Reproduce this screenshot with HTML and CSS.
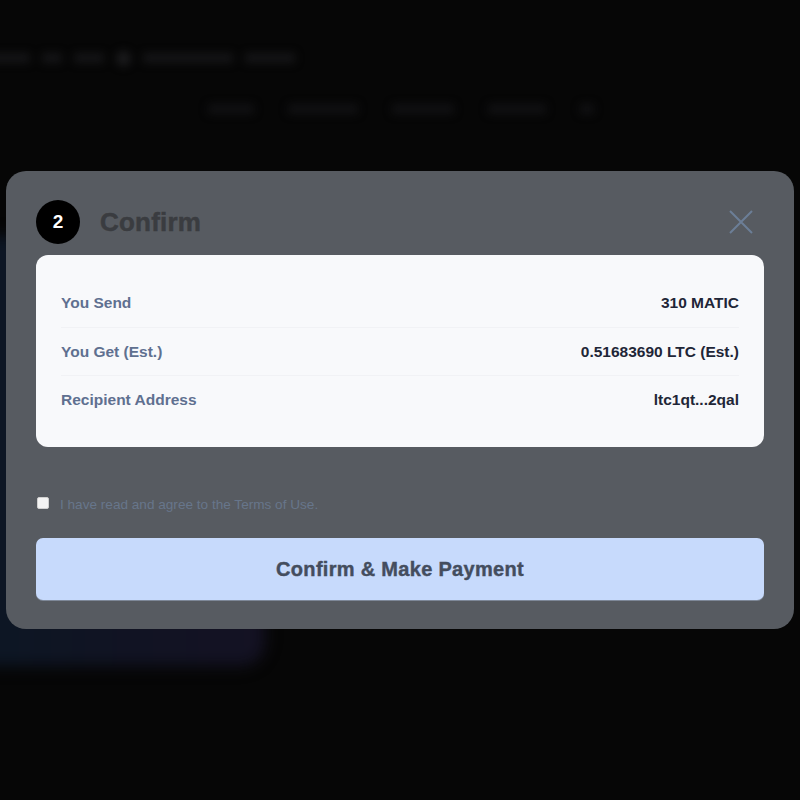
FILE: index.html
```html
<!DOCTYPE html>
<html lang="en">
<head>
<meta charset="utf-8">
<title>Confirm</title>
<link rel="stylesheet" href="styles.css">
</head>
<body>
<div class="backdrop">
  <div class="topbar">
    <span class="blob w40"></span><span class="blob w20"></span><span class="blob w30"></span>
    <span class="dot"></span><span class="blob w90"></span><span class="blob w50"></span>
  </div>
  <nav class="nav">
    <span class="blob w46"></span><span class="blob w70"></span><span class="blob w62"></span><span class="blob w58"></span><span class="blob w14"></span>
  </nav>
  <div class="hero-card"></div>
</div>

<div class="modal">
  <div class="modal-head">
    <div class="step">2</div>
    <h2 class="title">Confirm</h2>
    <button class="close" aria-label="Close">
      <svg width="24" height="24" viewBox="0 0 24 24"><path d="M1 1 L23 23 M23 1 L1 23" stroke="currentColor" stroke-width="2" fill="none"/></svg>
    </button>
  </div>
  <div class="summary">
    <div class="row"><span class="label">You Send</span><span class="value">310 MATIC</span></div>
    <div class="row"><span class="label">You Get (Est.)</span><span class="value">0.51683690 LTC (Est.)</span></div>
    <div class="row"><span class="label">Recipient Address</span><span class="value">ltc1qt...2qal</span></div>
  </div>
  <label class="agree"><input type="checkbox" class="check"><span>I have read and agree to the Terms of Use.</span></label>
  <button class="pay">Confirm &amp; Make Payment</button>
</div>
</body>
</html>
```
FILE: styles.css
```css
html, body {
  margin: 0;
  padding: 0;
}
body {
  width: 800px;
  height: 800px;
  overflow: hidden;
  background: #060606;
  font-family: "Liberation Sans", Arial, sans-serif;
  position: relative;
}
.backdrop {
  filter: blur(4px);
  padding-top: 51px;
}
.topbar {
  display: flex;
  align-items: center;
  gap: 12px;
  height: 14px;
  margin-left: -10px;
}
.blob {
  display: inline-block;
  height: 10px;
  background: #151517;
  border-radius: 3px;
}
.dot {
  width: 15px;
  height: 15px;
  border-radius: 50%;
  background: #1b1b1d;
}
.w14 { width: 14px; }
.w20 { width: 20px; }
.w30 { width: 30px; }
.w40 { width: 40px; }
.w46 { width: 46px; }
.w50 { width: 50px; }
.w58 { width: 58px; }
.w62 { width: 62px; }
.w70 { width: 70px; }
.w90 { width: 90px; }
.nav {
  display: flex;
  align-items: center;
  gap: 34px;
  margin-top: 37px;
  padding-left: 208px;
  height: 14px;
}
.nav .blob { background: #111113; }
.hero-card {
  margin-top: 120px;
  margin-left: -30px;
  width: 295px;
  height: 430px;
  border-radius: 24px;
  background: linear-gradient(90deg, #0c1724 0%, #111323 55%, #141223 100%);
  filter: blur(6px);
}

.modal {
  position: absolute;
  left: 6px;
  top: 171px;
  width: 788px;
  box-sizing: border-box;
  padding: 29px 30px 29px 30px;
  background: #575b61;
  border-radius: 20px;
}
.modal-head {
  display: flex;
  align-items: center;
  height: 44px;
}
.step {
  width: 44px;
  height: 44px;
  border-radius: 50%;
  background: #000;
  color: #fff;
  display: flex;
  align-items: center;
  justify-content: center;
  font-weight: 700;
  font-size: 19px;
}
.title {
  margin: 0 0 0 20px;
  font-size: 26px;
  font-weight: 700;
  color: #3a3c40;
  letter-spacing: 0.2px;
  -webkit-text-stroke: 0.5px #3a3c40;
  flex: 1;
}
.close {
  background: none;
  border: 0;
  padding: 0;
  margin-right: 11px;
  color: #6c7e97;
  width: 24px;
  height: 24px;
  display: flex;
}
.summary {
  margin-top: 11px;
  background: #f8f9fb;
  border-radius: 12px;
  padding: 24px 25px;
}
.row {
  display: flex;
  justify-content: space-between;
  align-items: center;
  height: 48px;
  font-size: 15.5px;
  font-weight: 700;
}
.row + .row {
  border-top: 1px solid #f1f2f5;
  height: 47px;
}
.label { color: #5f7090; }
.value { color: #1f2637; }
.agree {
  display: flex;
  align-items: center;
  margin-top: 50px;
  height: 14px;
  font-size: 13.6px;
  color: #67768b;
}
.check {
  appearance: none;
  -webkit-appearance: none;
  margin: 0 11px 0 1px;
  width: 12px;
  height: 12px;
  background: #f4f4f4;
  border: 1px solid #d0d0d0;
  border-radius: 2px;
  box-sizing: border-box;
  position: relative;
  top: -1px;
}
.pay {
  display: block;
  width: 100%;
  margin-top: 27px;
  height: 62px;
  border: 0;
  border-radius: 7px;
  background: #c7dafc;
  box-shadow: 0 1px 0 #7e8898;
  color: #444d5e;
  font-family: "Liberation Sans", Arial, sans-serif;
  font-size: 20px;
  font-weight: 700;
  letter-spacing: 0.3px;
  -webkit-text-stroke: 0.4px #444d5e;
}
```
